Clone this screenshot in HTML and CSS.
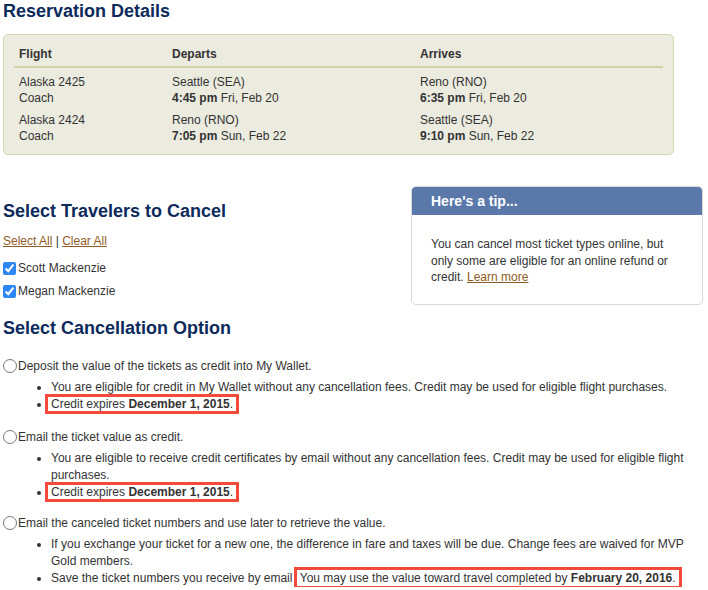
FILE: index.html
```html
<!DOCTYPE html>
<html lang="en">
<head>
<meta charset="utf-8">
<title>Reservation Details</title>
<link rel="stylesheet" href="styles.css">
</head>
<body>
<h1 class="title">Reservation Details</h1>
<div class="res-box">
  <table class="res-table">
    <thead>
      <tr><th class="c1">Flight</th><th class="c2">Departs</th><th>Arrives</th></tr>
    </thead>
    <tbody>
      <tr class="r1">
        <td>Alaska 2425<br>Coach</td>
        <td>Seattle (SEA)<br><b>4:45 pm</b> Fri, Feb 20</td>
        <td>Reno (RNO)<br><b>6:35 pm</b> Fri, Feb 20</td>
      </tr>
      <tr class="r2">
        <td>Alaska 2424<br>Coach</td>
        <td>Reno (RNO)<br><b>7:05 pm</b> Sun, Feb 22</td>
        <td>Seattle (SEA)<br><b>9:10 pm</b> Sun, Feb 22</td>
      </tr>
    </tbody>
  </table>
</div>

<div class="mid">
  <div class="travelers">
    <h2 class="title">Select Travelers to Cancel</h2>
    <div class="links"><a href="#">Select All</a> | <a href="#">Clear All</a></div>
    <label class="trav"><input type="checkbox" checked>Scott Mackenzie</label>
    <label class="trav"><input type="checkbox" checked>Megan Mackenzie</label>
  </div>
  <aside class="tip">
    <div class="tip-head">Here's a tip...</div>
    <div class="tip-body">You can cancel most ticket types online, but only some are eligible for an online refund or credit. <a href="#">Learn more</a></div>
  </aside>
</div>

<h2 class="title opt-title">Select Cancellation Option</h2>

<div class="option">
  <label class="opt"><input type="radio" name="opt">Deposit the value of the tickets as credit into My Wallet.</label>
  <ul>
    <li>You are eligible for credit in My Wallet without any cancellation fees. Credit may be used for eligible flight purchases.</li>
    <li><span class="hl">Credit expires <b>December 1, 2015</b>.</span></li>
  </ul>
</div>

<div class="option">
  <label class="opt"><input type="radio" name="opt">Email the ticket value as credit.</label>
  <ul>
    <li>You are eligible to receive credit certificates by email without any cancellation fees. Credit may be used for eligible flight purchases.</li>
    <li><span class="hl">Credit expires <b>December 1, 2015</b>.</span></li>
  </ul>
</div>

<div class="option option-last">
  <label class="opt"><input type="radio" name="opt">Email the canceled ticket numbers and use later to retrieve the value.</label>
  <ul>
    <li>If you exchange your ticket for a new one, the difference in fare and taxes will be due. Change fees are waived for MVP Gold members.</li>
    <li>Save the ticket numbers you receive by email <span class="hl hl-last">You may use the value toward travel completed by <b>February 20, 2016</b>.</span></li>
  </ul>
</div>
</body>
</html>
```

FILE: styles.css
```css
html, body {
  margin: 0;
  padding: 0;
  background: #fff;
}
body {
  padding: 0 5px 0 3px;
  font-family: "Liberation Sans", Arial, Helvetica, sans-serif;
  font-size: 12px;
  color: #333;
  overflow: hidden;
}
.title {
  margin: 0;
  font-size: 18px;
  line-height: 22px;
  font-weight: bold;
  color: #0c2a5c;
}
.res-box {
  margin: 12px 29px 0 0;
  background: #ecebdf;
  border: 1px solid #d4d7b0;
  border-radius: 5px;
  padding: 11px 10px 10px 10px;
}
.res-table {
  width: 100%;
  border-collapse: collapse;
}
.res-table th {
  text-align: left;
  font-weight: bold;
  line-height: 16px;
  padding: 0 5px 4px;
  border-bottom: 2px solid #cfd3a7;
}
.res-table th.c1 { width: 143px; }
.res-table th.c2 { width: 238px; }
.res-table td {
  vertical-align: top;
  line-height: 16px;
  padding: 6px 5px 0;
}

.mid {
  display: flex;
  align-items: flex-start;
  margin-top: 31px;
}
.travelers {
  flex: 1;
  padding-top: 14px;
}
.links {
  margin-top: 11px;
  line-height: 16px;
}
a {
  color: #8f5b26;
  text-decoration: underline;
}
.trav {
  display: flex;
  align-items: center;
  line-height: 16px;
  margin-top: 11px;
  color: #333;
}
.trav + .trav {
  margin-top: 7px;
}
.trav input {
  width: 13px;
  height: 13px;
  margin: 0 2px 0 0;
  accent-color: #2e86f5;
}
.tip {
  width: 290px;
  border: 1px solid #d9d9d9;
  border-radius: 5px;
  overflow: hidden;
}
.tip-head {
  background: #5a78aa;
  color: #fff;
  font-weight: bold;
  font-size: 14px;
  line-height: 28px;
  padding: 0 19px;
}
.tip-body {
  padding: 21px 19px 18px;
  line-height: 16.5px;
}

.opt-title {
  margin-top: 12px;
}
.option {
  margin-top: 19px;
}
.option + .option {
  margin-top: 16px;
}
.option + .option-last {
  margin-top: 14px;
}
.opt {
  display: flex;
  align-items: center;
  line-height: 17px;
}
.opt input {
  width: 14px;
  height: 14px;
  margin: 0 1px 0 0;
}
.option ul {
  margin: 4px 0 0;
  padding-left: 48px;
}
.option li {
  line-height: 17px;
}
.hl {
  border: 3px solid #f24a3b;
  padding: 0 3px;
  margin-left: -6px;
}
.hl-last {
  margin-left: -2px;
  padding: 1px 3px;
}
```
